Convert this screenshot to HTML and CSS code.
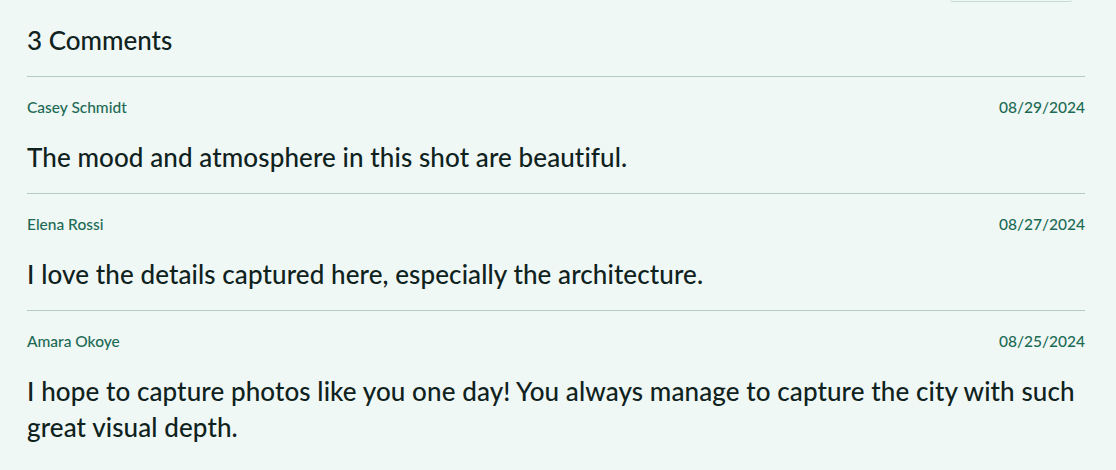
FILE: index.html
```html
<!DOCTYPE html>
<html>
<head>
<meta charset="utf-8">
<link rel="stylesheet" href="styles.css">
</head>
<body>
<div class="page">
  <div class="top-row"><div class="btn-edge"></div></div>
  <h2 class="title">3 Comments</h2>
  <ul class="comments">
    <li class="comment">
      <div class="meta"><span class="author">Casey Schmidt</span><span class="date">08/29/2024</span></div>
      <p class="text">The mood and atmosphere in this shot are beautiful.</p>
    </li>
    <li class="comment">
      <div class="meta"><span class="author">Elena Rossi</span><span class="date">08/27/2024</span></div>
      <p class="text">I love the details captured here, especially the architecture.</p>
    </li>
    <li class="comment">
      <div class="meta"><span class="author">Amara Okoye</span><span class="date">08/25/2024</span></div>
      <p class="text">I hope to capture photos like you one day! You always manage to capture the city with such great visual depth.</p>
    </li>
  </ul>
</div>
</body>
</html>
```
FILE: styles.css
```css
html, body {
  margin: 0;
  padding: 0;
  background: #eff8f5;
}
body {
  font-family: "Lato", "Noto Sans", sans-serif;
  color: #0f221d;
}
.page {
  padding: 0 31px 0 27px;
}
.top-row {
  display: flex;
  justify-content: flex-end;
  height: 2px;
  padding-right: 13px;
}
.btn-edge {
  width: 122px;
  height: 1px;
  border-bottom: 1px solid #c3ddd5;
  border-radius: 0 0 6px 6px;
}
.title {
  margin: 22px 0 20px;
  font-size: 26px;
  line-height: 32px;
  font-weight: 500;
}
.comments {
  list-style: none;
  margin: 0;
  padding: 0;
}
.comment {
  border-top: 1.5px solid #b2ccc5;
  padding: 20px 0 18px;
}
.meta {
  display: flex;
  justify-content: space-between;
  font-size: 15.5px;
  line-height: 20px;
  color: #1d6a55;
  font-weight: 500;
}
.text {
  margin: 22px 0 0;
  font-size: 26px;
  line-height: 36px;
  font-weight: 500;
  letter-spacing: 0.1px;
}
```
